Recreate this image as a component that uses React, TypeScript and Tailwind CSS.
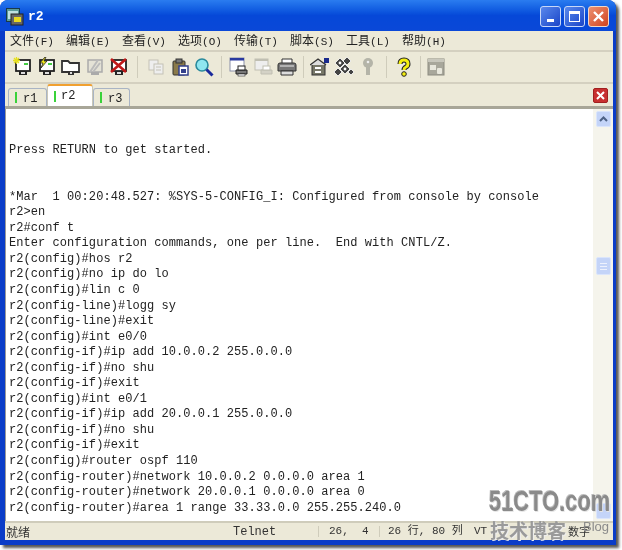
import React from "react";

const lines = [
  "", "", "Press RETURN to get started.", "", "",
  "*Mar  1 00:20:48.527: %SYS-5-CONFIG_I: Configured from console by console",
  "r2>en", "r2#conf t",
  "Enter configuration commands, one per line.  End with CNTL/Z.",
  "r2(config)#hos r2", "r2(config)#no ip do lo", "r2(config)#lin c 0",
  "r2(config-line)#logg sy", "r2(config-line)#exit", "r2(config)#int e0/0",
  "r2(config-if)#ip add 10.0.0.2 255.0.0.0", "r2(config-if)#no shu", "r2(config-if)#exit",
  "r2(config)#int e0/1", "r2(config-if)#ip add 20.0.0.1 255.0.0.0", "r2(config-if)#no shu",
  "r2(config-if)#exit", "r2(config)#router ospf 110",
  "r2(config-router)#network 10.0.0.2 0.0.0.0 area 1",
  "r2(config-router)#network 20.0.0.1 0.0.0.0 area 0",
  "r2(config-router)#area 1 range 33.33.0.0 255.255.240.0",
];

const menus: [string, string][] = [["文件", "F"], ["编辑", "E"], ["查看", "V"], ["选项", "O"], ["传输", "T"], ["脚本", "S"], ["工具", "L"], ["帮助", "H"]];

const Pc = ({ c = "#222" }: { c?: string }) => (
  <>
    <rect x="3" y="3" width="14" height="11" fill="#fff" stroke={c} strokeWidth="1.8" />
    <rect x="6" y="14" width="8" height="4" fill={c} />
    <rect x="8" y="15" width="4" height="2" fill="#ddd" />
  </>
);

const icons: React.ReactNode[] = [
  <><Pc /><path d="M1 1l5 5M6 1L1 6M3.500 0v7M0 3.500h7" stroke="#e6e020" strokeWidth="1.300" /><rect x="11" y="6" width="4" height="2" fill="#4c4" /></>,
  <><Pc /><path d="M8 0L3 6h3l-2 5 6-7H7l2-4z" fill="#f0e81c" stroke="#222" strokeWidth="0.800" /><rect x="11" y="6" width="4" height="2" fill="#4c4" /></>,
  <><path d="M1 15V4h6l2 2h9v9z" fill="#fff" stroke="#333" strokeWidth="1.800" /><rect x="7" y="14" width="6" height="4" fill="#333" /><rect x="9" y="15" width="2" height="2" fill="#ddd" /></>,
  <><rect x="3" y="3" width="14" height="12" fill="#e4e2d6" stroke="#aaa" strokeWidth="1.500" /><path d="M5 15L13 3M8 15l7-9" stroke="#bbb" strokeWidth="2" /><rect x="6" y="15" width="8" height="3" fill="#aaa" /></>,
  <><Pc /><path d="M2 2l15 13M17 2L2 15" stroke="#c01818" strokeWidth="2.600" /></>,
  <><rect x="3" y="3" width="9" height="10" fill="#eee" stroke="#c4c2b6" /><rect x="8" y="7" width="9" height="10" fill="#eee" stroke="#c4c2b6" /><path d="M10 10h5M10 13h5" stroke="#c4c2b6" /></>,
  <><rect x="3" y="4" width="12" height="14" rx="1" fill="#8a7a4a" stroke="#333" /><rect x="6" y="2" width="6" height="4" fill="#777" stroke="#333" /><rect x="9" y="9" width="9" height="9" fill="#fff" stroke="#33408c" strokeWidth="1.500" /><rect x="11" y="12" width="5" height="4" fill="#33408c" /></>,
  <><circle cx="8" cy="8" r="6" fill="#8fe6f0" stroke="#2a8a9c" strokeWidth="1.600" /><path d="M12.500 12.500l6 6" stroke="#1a2a9c" strokeWidth="3" /></>,
  <><rect x="1" y="1" width="14" height="13" fill="#fff" stroke="#8a90a8" /><rect x="1" y="1" width="14" height="2.500" fill="#2a3aa0" /><path d="M7 13h11v4H7z" fill="#777" stroke="#222" /><rect x="9" y="9" width="7" height="4" fill="#fff" stroke="#222" /><rect x="9" y="17" width="7" height="2" fill="#fff" stroke="#222" strokeWidth="0.600" /></>,
  <><rect x="2" y="2" width="13" height="11" fill="#eee" stroke="#c0bfb2" /><rect x="2" y="2" width="13" height="2" fill="#c0bfb2" /><path d="M8 13h11v4H8z" fill="#d4d2c6" stroke="#c0bfb2" /><rect x="10" y="9" width="7" height="4" fill="#fff" stroke="#c0bfb2" /></>,
  <><path d="M5 2h10v5H5z" fill="#fff" stroke="#333" /><path d="M1 8q0-2 2-2h14q2 0 2 2v6H1z" fill="#777" stroke="#333" /><path d="M4 14h12v4H4z" fill="#ddd" stroke="#333" /><path d="M3 9h14" stroke="#eee" /></>,
  <><rect x="2" y="7" width="13" height="11" fill="#777768" stroke="#333" /><path d="M0 8l8-6 8 6" fill="#ddd" stroke="#333" strokeWidth="1.400" /><rect x="14" y="1" width="5" height="5" fill="#1a2a8c" /><rect x="5" y="10" width="6" height="2" fill="#fff" /><rect x="5" y="14" width="6" height="2" fill="#fff" /></>,
  <><path d="M1 6l5-5 5 5-5 5zM9 4l4-4 4 4-4 4zM6 12l5-5 5 5-5 5zM0 15l4-4 4 4-4 4zM14 15l3-3 3 3-3 3z" fill="#444" stroke="#fff" strokeWidth="0.800" /><circle cx="6" cy="6" r="1.400" fill="#fff" /><circle cx="11" cy="12" r="1.400" fill="#fff" /></>,
  <><circle cx="10" cy="6" r="5" fill="#b4b4a8" /><rect x="8" y="10" width="4" height="8" fill="#b4b4a8" /><circle cx="10" cy="5" r="1.300" fill="#eee" /></>,
  <><path d="M6 7q0-4 4-4t4 4q0 2-2 3t-2 3" fill="none" stroke="#222" strokeWidth="5" /><path d="M6 7q0-4 4-4t4 4q0 2-2 3t-2 3" fill="none" stroke="#f4ee10" strokeWidth="3" /><circle cx="10" cy="17" r="2.300" fill="#f4ee10" stroke="#222" /></>,
  <><rect x="2" y="2" width="16" height="16" fill="#a8a79b" stroke="#8c8b80" /><rect x="2" y="2" width="16" height="3" fill="#c8c7bc" /><rect x="4" y="8" width="6" height="5" fill="#e8e7dc" /><rect x="11" y="11" width="5" height="6" rx="1" fill="#e8e7dc" /></>,
];

const Btn = ({ i }: { i: number }) => (
  <div className="w-[24px] flex items-center justify-center">
    <svg width="20" height="20" viewBox="0 0 20 20">{icons[i]}</svg>
  </div>
);
const Sep = ({ w }: { w: string }) => (
  <div className={`${w} flex justify-center`}>
    <div className="w-[1px] h-[22px] bg-[#cfccbb]" />
  </div>
);

const Tab = ({ label, active, w }: { label: string; active?: boolean; w: string }) => (
  <div
    className={
      active
        ? `${w} h-[22px] bg-white border-t-[2px] border-t-[#f0a030] rounded-t-[3px] border-x border-x-[#c9c7b8] flex items-center pl-[6px] gap-[5px]`
        : `${w} h-[18px] bg-[#ece9d8] border-t border-x border-[#a9b4c4] rounded-t-[3px] flex items-center pl-[6px] gap-[6px]`
    }
  >
    <div className="w-[2px] h-[11px] bg-[#3ad23a]" />
    <span className={`${active ? "" : "mt-[3px]"} text-[12px] leading-none text-[#222] font-['Liberation_Mono',monospace]`}>{label}</span>
  </div>
);

export default function App() {
  return (
    <div className="relative w-[622px] h-[550px] bg-white overflow-hidden blur-[0.5px]">
      <div className="w-[616px] h-[545px] flex flex-col rounded-t-[8px] bg-[#0a3cc8] shadow-[3px_3px_3px_#555]">
        {/* title bar */}
        <div className="h-[31px] shrink-0 rounded-t-[8px] bg-gradient-to-b from-[#2a7cf0] via-[#0648d8] to-[#0a48d8] flex items-center pl-[6px] pr-[7px]">
          <svg width="18" height="18" viewBox="0 0 18 18" className="mt-[3px]">
            <rect x="0.500" y="0.500" width="13" height="13" fill="#5a9a98" stroke="#1a3a4a" />
            <rect x="2" y="3" width="10" height="8" fill="#bfe0e0" />
            <rect x="5" y="6" width="12" height="11" fill="#666" stroke="#222" />
            <rect x="8" y="9" width="7" height="5" fill="#e8d820" />
          </svg>
          <span className="ml-[4px] mt-[3px] text-white font-bold text-[13px] font-['Liberation_Mono',monospace]">r2</span>
          <div className="ml-auto flex gap-[3px] mt-[2px]">
            <div className="w-[21px] h-[21px] rounded-[3px] border border-[#c8d8f8] bg-gradient-to-br from-[#5a88ec] to-[#1c44c8] flex items-end justify-center pb-[4px]">
              <div className="w-[7px] h-[3px] bg-white" />
            </div>
            <div className="w-[21px] h-[21px] rounded-[3px] border border-[#c8d8f8] bg-gradient-to-br from-[#5a88ec] to-[#1c44c8] flex items-center justify-center">
              <div className="w-[11px] h-[11px] border border-white border-t-[3px]" />
            </div>
            <div className="w-[21px] h-[21px] rounded-[3px] border border-[#f0d8c8] bg-gradient-to-br from-[#ec9070] to-[#d04018] flex items-center justify-center">
              <svg width="13" height="13" viewBox="0 0 13 13"><path d="M2 2l9 9M11 2l-9 9" stroke="#fff" strokeWidth="2.400" /></svg>
            </div>
          </div>
        </div>

        <div className="flex-1 min-h-0 ml-[5px] mr-[3px] mb-[5px] bg-[#ece9d8] flex flex-col">
          {/* menu */}
          <div className="h-[21px] shrink-0 border-b-[2px] border-b-[#d4d0c0] pl-[5px] flex gap-[12px] items-center text-[12px] text-[#222] font-['Noto_Sans_CJK_SC',sans-serif]">
            {menus.map(([a, b]) => (
              <span key={b} className="w-[44px] whitespace-nowrap leading-none">
                {a}<span className="text-[11px] font-['Liberation_Mono',monospace]">({b})</span>
              </span>
            ))}
          </div>

          {/* toolbar */}
          <div className="h-[32px] shrink-0 border-b-[2px] border-b-[#d4d0c0] pl-[6px] flex items-center">
            <Btn i={0} /><Btn i={1} /><Btn i={2} /><Btn i={3} /><Btn i={4} />
            <Sep w="w-[13px]" />
            <Btn i={5} /><Btn i={6} /><Btn i={7} />
            <Sep w="w-[11px]" />
            <Btn i={8} /><Btn i={9} /><Btn i={10} />
            <Sep w="w-[9px]" />
            <Btn i={11} /><Btn i={12} /><Btn i={13} />
            <Sep w="w-[12px]" />
            <Btn i={14} />
            <Sep w="w-[8px]" />
            <Btn i={15} />
          </div>

          {/* tabs */}
          <div className="h-[25px] shrink-0 border-b-[3px] border-b-[#a8a698] pl-[3px] pr-[5px] flex items-end">
            <Tab label="r1" w="w-[39px]" />
            <Tab label="r2" active w="w-[46px]" />
            <Tab label="r3" w="w-[37px]" />
            <div className="ml-auto self-center w-[15px] h-[15px] rounded-[2px] bg-[#c83030] border border-[#a02020] flex items-center justify-center">
              <svg width="9" height="9" viewBox="0 0 9 9"><path d="M1 1l7 7M8 1L1 8" stroke="#fff" strokeWidth="2" /></svg>
            </div>
          </div>

          {/* terminal */}
          <div className="flex-1 min-h-0 flex">
            <div className="flex-1 min-w-0 bg-white pl-[3px] pt-[3px] overflow-hidden border-l border-l-[#999]">
              {lines.map((l, i) => (
                <div key={i} className="h-[15.55px] leading-[15.55px] text-[12px] tracking-[0.06px] text-[#222] whitespace-pre font-['Liberation_Mono',monospace]">{l}</div>
              ))}
            </div>
            <div className="w-[20px] shrink-0 bg-[#f5f4ec] flex flex-col items-center pt-[2px] pb-[2px]">
              <div className="w-[15px] h-[16px] rounded-[2px] bg-[#c4d4f8] border border-[#dbe5fb] flex items-center justify-center">
                <svg width="9" height="6" viewBox="0 0 9 6"><path d="M1 5l3.500-3.500L8 5" fill="none" stroke="#4d6185" strokeWidth="2" /></svg>
              </div>
              <div className="mt-[130px] w-[15px] h-[18px] rounded-[2px] bg-[#c4d4f8] border border-[#dbe5fb] flex flex-col items-center justify-center gap-[2px]">
                <div className="w-[7px] h-[1px] bg-[#eef2fd]" />
                <div className="w-[7px] h-[1px] bg-[#eef2fd]" />
                <div className="w-[7px] h-[1px] bg-[#eef2fd]" />
              </div>
              <div className="mt-auto w-[15px] h-[16px] rounded-[2px] bg-[#c4d4f8] border border-[#dbe5fb]" />
            </div>
          </div>

          {/* status */}
          <div className="h-[19px] shrink-0 border-t-[2px] border-t-[#cfccbb] flex items-center text-[12px] text-[#333] font-['Liberation_Mono',monospace]">
            <span className="w-[228px] pl-[1px] font-['Noto_Sans_CJK_SC',sans-serif] leading-none">就绪</span>
            <span className="w-[85px] leading-none">Telnet</span>
            <span className="w-[61px] border-l border-[#cfccbb] pl-[10px] whitespace-pre text-[11px] leading-none">26,  4</span>
            <span className="w-[95px] border-l border-[#cfccbb] pl-[8px] whitespace-pre text-[11px] leading-none font-['Liberation_Mono','Noto_Sans_CJK_SC',monospace]">26 行, 80 列</span>
            <span className="w-[94px] leading-none text-[11px]">VT</span>
            <span className="leading-none text-[11px] font-['Noto_Sans_CJK_SC',sans-serif]">数字</span>
          </div>
        </div>
      </div>

      {/* watermark */}
      <div className="absolute left-[489px] top-[483px] origin-left scale-x-[0.73] text-[30px] leading-[36px] font-bold text-[#8a8a8a] font-['Liberation_Sans',sans-serif] [text-shadow:1px_1px_0_#e5e5e5,-1px_-1px_0_#bbb] whitespace-nowrap">
        51CTO.com
      </div>
      <div className="absolute left-[490px] top-[519px] text-[19px] leading-[22px] font-bold text-[#9a9a9a] font-['Noto_Sans_CJK_SC',sans-serif] [text-shadow:1px_1px_0_#eee] whitespace-nowrap">
        技术博客
      </div>
      <div className="absolute left-[583px] top-[519px] text-[13px] leading-[16px] text-[#8a8a8a] font-['Liberation_Sans',sans-serif]">Blog</div>
    </div>
  );
}
